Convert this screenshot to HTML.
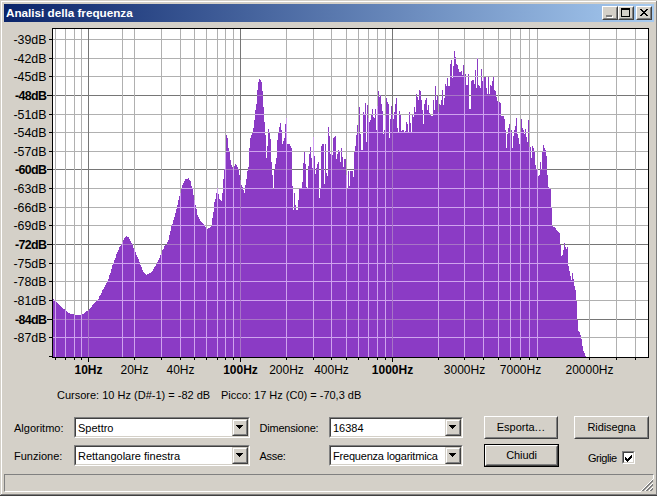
<!DOCTYPE html><html><head><meta charset="utf-8"><style>

*{margin:0;padding:0;box-sizing:border-box}
html,body{width:657px;height:496px;overflow:hidden;background:#D4D0C8}
body{position:relative;font-family:"Liberation Sans",sans-serif;font-size:11px;color:#000}
.a{position:absolute;white-space:nowrap}
.lb{position:absolute;white-space:nowrap;line-height:13px}
.db{position:absolute;right:610.5px;white-space:nowrap;line-height:13px;font-size:12.4px}
.hz{position:absolute;white-space:nowrap;line-height:13px;font-size:12px;transform:translateX(-50%)}
.combo{position:absolute;background:#fff;border-top:1px solid #808080;border-left:1px solid #808080;border-bottom:1px solid #fff;border-right:1px solid #fff}
.combo .in{position:absolute;left:0;top:0;right:0;bottom:0;border-top:1px solid #404040;border-left:1px solid #404040;border-bottom:1px solid #D4D0C8;border-right:1px solid #D4D0C8}
.combo .txt{position:absolute;left:3px;top:4px;line-height:13px;font-size:11px}
.dbtn{position:absolute;right:0;top:0;width:16px;bottom:0;background:#D4D0C8;border-top:1px solid #D4D0C8;border-left:1px solid #D4D0C8;border-bottom:1px solid #404040;border-right:1px solid #404040}
.dbtn .i2{position:absolute;left:0;top:0;right:0;bottom:0;border-top:1px solid #fff;border-left:1px solid #fff;border-bottom:1px solid #808080;border-right:1px solid #808080}
.arr{position:absolute;left:4px;top:6px;width:0;height:0;border-left:3.5px solid transparent;border-right:3.5px solid transparent;border-top:4px solid #000}
.btn{position:absolute;background:#D4D0C8;border-top:1px solid #fff;border-left:1px solid #fff;border-bottom:1px solid #404040;border-right:1px solid #404040}
.btn .i2{position:absolute;left:0;top:0;right:0;bottom:0;border-top:1px solid #D4D0C8;border-left:1px solid #D4D0C8;border-bottom:1px solid #808080;border-right:1px solid #808080}
.btn .t{position:absolute;left:0;right:0;text-align:center;line-height:13px;font-size:11px;margin-top:-1px}

</style></head><body>
<div class="a" style="left:0px;top:0px;width:657px;height:1px;background:#D4D0C8"></div>
<div class="a" style="left:0px;top:0px;width:1px;height:496px;background:#D4D0C8"></div>
<div class="a" style="left:1px;top:1px;width:655px;height:1px;background:#fff"></div>
<div class="a" style="left:1px;top:1px;width:1px;height:494px;background:#fff"></div>
<div class="a" style="left:0px;top:495px;width:657px;height:1px;background:#404040"></div>
<div class="a" style="left:1px;top:494px;width:656px;height:1px;background:#808080"></div>
<div class="a" style="left:656px;top:1px;width:1px;height:494px;background:#808080"></div>
<div class="a" style="left:4px;top:4px;width:650px;height:18px;background:linear-gradient(to right,#0A246A,#A6CAF0)"></div>
<div class="a" style="left:6px;top:5px;line-height:16px;font-size:11.7px;font-weight:bold;color:#fff">Analisi della frequenza</div>
<div class="btn" style="left:602px;top:6px;width:16px;height:14px"><div class="i2"></div></div>
<div class="btn" style="left:618px;top:6px;width:16px;height:14px"><div class="i2"></div></div>
<div class="btn" style="left:636px;top:6px;width:16px;height:14px"><div class="i2"></div></div>
<div class="a" style="left:607px;top:16px;width:6px;height:2px;background:#fff"></div>
<div class="a" style="left:606px;top:15px;width:6px;height:2px;background:#808080"></div>
<div class="a" style="left:621px;top:8px;width:9px;height:2px;background:#000"></div>
<div class="a" style="left:621px;top:10px;width:1px;height:7px;background:#000"></div>
<div class="a" style="left:629px;top:10px;width:1px;height:7px;background:#000"></div>
<div class="a" style="left:621px;top:16px;width:9px;height:1px;background:#000"></div>
<div class="a" style="left:640px;top:9px;width:1px;height:1px;background:#000"></div>
<div class="a" style="left:641px;top:9px;width:1px;height:1px;background:#000"></div>
<div class="a" style="left:646px;top:9px;width:1px;height:1px;background:#000"></div>
<div class="a" style="left:647px;top:9px;width:1px;height:1px;background:#000"></div>
<div class="a" style="left:641px;top:10px;width:1px;height:1px;background:#000"></div>
<div class="a" style="left:642px;top:10px;width:1px;height:1px;background:#000"></div>
<div class="a" style="left:645px;top:10px;width:1px;height:1px;background:#000"></div>
<div class="a" style="left:646px;top:10px;width:1px;height:1px;background:#000"></div>
<div class="a" style="left:642px;top:11px;width:1px;height:1px;background:#000"></div>
<div class="a" style="left:643px;top:11px;width:1px;height:1px;background:#000"></div>
<div class="a" style="left:644px;top:11px;width:1px;height:1px;background:#000"></div>
<div class="a" style="left:645px;top:11px;width:1px;height:1px;background:#000"></div>
<div class="a" style="left:643px;top:12px;width:1px;height:1px;background:#000"></div>
<div class="a" style="left:644px;top:12px;width:1px;height:1px;background:#000"></div>
<div class="a" style="left:642px;top:13px;width:1px;height:1px;background:#000"></div>
<div class="a" style="left:643px;top:13px;width:1px;height:1px;background:#000"></div>
<div class="a" style="left:644px;top:13px;width:1px;height:1px;background:#000"></div>
<div class="a" style="left:645px;top:13px;width:1px;height:1px;background:#000"></div>
<div class="a" style="left:641px;top:14px;width:1px;height:1px;background:#000"></div>
<div class="a" style="left:642px;top:14px;width:1px;height:1px;background:#000"></div>
<div class="a" style="left:645px;top:14px;width:1px;height:1px;background:#000"></div>
<div class="a" style="left:646px;top:14px;width:1px;height:1px;background:#000"></div>
<div class="a" style="left:640px;top:15px;width:1px;height:1px;background:#000"></div>
<div class="a" style="left:641px;top:15px;width:1px;height:1px;background:#000"></div>
<div class="a" style="left:646px;top:15px;width:1px;height:1px;background:#000"></div>
<div class="a" style="left:647px;top:15px;width:1px;height:1px;background:#000"></div>
<svg width="657" height="496" style="position:absolute;left:0;top:0">
<defs><clipPath id="sp"><polygon points="53,357 53,299 54,299 54,300 55,300 55,301 56,301 56,302 57,302 57,303 58,303 58,304 59,304 59,305 60,305 60,306 61,306 61,307 62,307 62,308 63,308 63,309 64,309 64,309 65,309 65,310 66,310 66,311 67,311 67,312 68,312 68,313 69,313 69,313 70,313 70,314 71,314 71,314 72,314 72,314 73,314 73,314 74,314 74,315 75,315 75,315 76,315 76,315 77,315 77,315 78,315 78,315 79,315 79,315 80,315 80,315 81,315 81,314 82,314 82,314 83,314 83,314 84,314 84,313 85,313 85,312 86,312 86,311 87,311 87,311 88,311 88,310 89,310 89,309 90,309 90,308 91,308 91,307 92,307 92,305 93,305 93,304 94,304 94,303 95,303 95,302 96,302 96,301 97,301 97,300 98,300 98,299 99,299 99,296 100,296 100,295 101,295 101,293 102,293 102,290 103,290 103,289 104,289 104,287 105,287 105,285 106,285 106,283 107,283 107,281 108,281 108,279 109,279 109,275 110,275 110,273 111,273 111,269 112,269 112,265 113,265 113,263 114,263 114,260 115,260 115,258 116,258 116,254 117,254 117,252 118,252 118,250 119,250 119,247 120,247 120,246 121,246 121,244 122,244 122,242 123,242 123,240 124,240 124,238 125,238 125,237 126,237 126,236 127,236 127,237 128,237 128,237 129,237 129,239 130,239 130,241 131,241 131,243 132,243 132,244 133,244 133,248 134,248 134,249 135,249 135,252 136,252 136,255 137,255 137,257 138,257 138,259 139,259 139,262 140,262 140,265 141,265 141,267 142,267 142,270 143,270 143,272 144,272 144,273 145,273 145,274 146,274 146,275 147,275 147,274 148,274 148,274 149,274 149,273 150,273 150,273 151,273 151,272 152,272 152,271 153,271 153,269 154,269 154,267 155,267 155,266 156,266 156,264 157,264 157,262 158,262 158,260 159,260 159,258 160,258 160,255 161,255 161,254 162,254 162,250 163,250 163,249 164,249 164,246 165,246 165,245 166,245 166,245 167,245 167,242 168,242 168,240 169,240 169,235 170,235 170,231 171,231 171,226 172,226 172,224 173,224 173,220 174,220 174,217 175,217 175,213 176,213 176,209 177,209 177,205 178,205 178,200 179,200 179,196 180,196 180,193 181,193 181,189 182,189 182,185 183,185 183,183 184,183 184,181 185,181 185,179 186,179 186,179 187,179 187,179 188,179 188,178 189,178 189,180 190,180 190,181 191,181 191,186 192,186 192,188 193,188 193,195 194,195 194,200 195,200 195,205 196,205 196,209 197,209 197,215 198,215 198,217 199,217 199,219 200,219 200,221 201,221 201,222 202,222 202,223 203,223 203,224 204,224 204,225 205,225 205,227 206,227 206,228 207,228 207,229 208,229 208,228 209,228 209,228 210,228 210,227 211,227 211,226 212,226 212,218 213,218 213,212 214,212 214,202 215,202 215,199 216,199 216,193 217,193 217,188 218,188 218,194 219,194 219,199 220,199 220,200 221,200 221,201 222,201 222,193 223,193 223,179 224,179 224,169 225,169 225,153 226,153 226,135 227,135 227,138 228,138 228,148 229,148 229,152 230,152 230,160 231,160 231,165 232,165 232,167 233,167 233,168 234,168 234,166 235,166 235,164 236,164 236,165 237,165 237,167 238,167 238,169 239,169 239,175 240,175 240,180 241,180 241,185 242,185 242,187 243,187 243,190 244,190 244,193 245,193 245,185 246,185 246,179 247,179 247,171 248,171 248,167 249,167 249,148 250,148 250,138 251,138 251,135 252,135 252,133 253,133 253,128 254,128 254,120 255,120 255,110 256,110 256,104 257,104 257,90 258,90 258,82 259,82 259,79 260,79 260,80 261,80 261,82 262,82 262,91 263,91 263,107 264,107 264,122 265,122 265,135 266,135 266,158 267,158 267,146 268,146 268,129 269,129 269,133 270,133 270,139 271,139 271,162 272,162 272,175 273,175 273,189 274,189 274,170 275,170 275,164 276,164 276,158 277,158 277,140 278,140 278,133 279,133 279,127 280,127 280,123 281,123 281,130 282,130 282,144 283,144 283,141 284,141 284,138 285,138 285,124 286,124 286,118 287,118 287,144 288,144 288,144 289,144 289,144 290,144 290,146 291,146 291,148 292,148 292,186 293,186 293,210 294,210 294,193 295,193 295,205 296,205 296,210 297,210 297,210 298,210 298,200 299,200 299,189 300,189 300,188 301,188 301,188 302,188 302,182 303,182 303,163 304,163 304,152 305,152 305,164 306,164 306,187 307,187 307,188 308,188 308,166 309,166 309,154 310,154 310,147 311,147 311,158 312,158 312,168 313,168 313,137 314,137 314,156 315,156 315,174 316,174 316,168 317,168 317,164 318,164 318,162 319,162 319,198 320,198 320,188 321,188 321,146 322,146 322,144 323,144 323,144 324,144 324,184 325,184 325,144 326,144 326,173 327,173 327,176 328,176 328,127 329,127 329,136 330,136 330,154 331,154 331,152 332,152 332,155 333,155 333,138 334,138 334,137 335,137 335,136 336,136 336,159 337,159 337,154 338,154 338,150 339,150 339,151 340,151 340,162 341,162 341,148 342,148 342,157 343,157 343,167 344,167 344,159 345,159 345,159 346,159 346,175 347,175 347,189 348,189 348,171 349,171 349,186 350,186 350,171 351,171 351,171 352,171 352,171 353,171 353,177 354,177 354,152 355,152 355,146 356,146 356,135 357,135 357,125 358,125 358,134 359,134 359,107 360,107 360,134 361,134 361,150 362,150 362,150 363,150 363,112 364,112 364,114 365,114 365,103 366,103 366,142 367,142 367,105 368,105 368,118 369,118 369,122 370,122 370,120 371,120 371,115 372,115 372,109 373,109 373,117 374,117 374,118 375,118 375,109 376,109 376,130 377,130 377,106 378,106 378,91 379,91 379,97 380,97 380,95 381,95 381,104 382,104 382,111 383,111 383,134 384,134 384,130 385,130 385,116 386,116 386,98 387,98 387,102 388,102 388,104 389,104 389,138 390,138 390,119 391,119 391,106 392,106 392,114 393,114 393,119 394,119 394,112 395,112 395,104 396,104 396,98 397,98 397,128 398,128 398,132 399,132 399,111 400,111 400,115 401,115 401,131 402,131 402,130 403,130 403,130 404,130 404,132 405,132 405,131 406,131 406,122 407,122 407,124 408,124 408,132 409,132 409,112 410,112 410,123 411,123 411,132 412,132 412,115 413,115 413,117 414,117 414,107 415,107 415,112 416,112 416,94 417,94 417,97 418,97 418,100 419,100 419,90 420,90 420,91 421,91 421,100 422,100 422,110 423,110 423,124 424,124 424,104 425,104 425,100 426,100 426,98 427,98 427,110 428,110 428,105 429,105 429,113 430,113 430,115 431,115 431,116 432,116 432,116 433,116 433,100 434,100 434,110 435,110 435,86 436,86 436,100 437,100 437,96 438,96 438,112 439,112 439,104 440,104 440,105 441,105 441,100 442,100 442,90 443,90 443,105 444,105 444,98 445,98 445,84 446,84 446,86 447,86 447,78 448,78 448,86 449,86 449,86 450,86 450,64 451,64 451,60 452,60 452,78 453,78 453,66 454,66 454,51 455,51 455,57 456,57 456,64 457,64 457,65 458,65 458,69 459,69 459,72 460,72 460,72 461,72 461,71 462,71 462,75 463,75 463,65 464,65 464,77 465,77 465,74 466,74 466,85 467,85 467,85 468,85 468,74 469,74 469,109 470,109 470,109 471,109 471,81 472,81 472,80 473,80 473,80 474,80 474,84 475,84 475,70 476,70 476,88 477,88 477,58 478,58 478,85 479,85 479,86 480,86 480,88 481,88 481,69 482,69 482,81 483,81 483,78 484,78 484,77 485,77 485,77 486,77 486,88 487,88 487,94 488,94 488,77 489,77 489,94 490,94 490,85 491,85 491,86 492,86 492,81 493,81 493,77 494,77 494,90 495,90 495,91 496,91 496,97 497,97 497,101 498,101 498,102 499,102 499,102 500,102 500,103 501,103 501,116 502,116 502,116 503,116 503,116 504,116 504,119 505,119 505,130 506,130 506,148 507,148 507,134 508,134 508,128 509,128 509,124 510,124 510,132 511,132 511,130 512,130 512,148 513,148 513,136 514,136 514,130 515,130 515,126 516,126 516,118 517,118 517,134 518,134 518,138 519,138 519,144 520,144 520,132 521,132 521,119 522,119 522,128 523,128 523,130 524,130 524,134 525,134 525,129 526,129 526,137 527,137 527,142 528,142 528,120 529,120 529,147 530,147 530,147 531,147 531,158 532,158 532,146 533,146 533,148 534,148 534,152 535,152 535,165 536,165 536,169 537,169 537,169 538,169 538,176 539,176 539,175 540,175 540,162 541,162 541,169 542,169 542,152 543,152 543,145 544,145 544,148 545,148 545,150 546,150 546,156 547,156 547,175 548,175 548,187 549,187 549,188 550,188 550,189 551,189 551,207 552,207 552,226 553,226 553,227 554,227 554,227 555,227 555,228 556,228 556,230 557,230 557,231 558,231 558,232 559,232 559,233 560,233 560,245 561,245 561,256 562,256 562,255 563,255 563,250 564,250 564,243 565,243 565,247 566,247 566,249 567,249 567,247 568,247 568,266 569,266 569,271 570,271 570,276 571,276 571,280 572,280 572,273 573,273 573,279 574,279 574,286 575,286 575,290 576,290 576,301 577,301 577,320 578,320 578,331 579,331 579,332 580,332 580,335 581,335 581,339 582,339 582,346 583,346 583,351 584,351 584,353 585,353 585,356 586,356 586,357 587,357 587,357"/></clipPath></defs>
<rect x="52" y="28" width="597" height="330" fill="#fff"/>
<polygon points="53,357 53,299 54,299 54,300 55,300 55,301 56,301 56,302 57,302 57,303 58,303 58,304 59,304 59,305 60,305 60,306 61,306 61,307 62,307 62,308 63,308 63,309 64,309 64,309 65,309 65,310 66,310 66,311 67,311 67,312 68,312 68,313 69,313 69,313 70,313 70,314 71,314 71,314 72,314 72,314 73,314 73,314 74,314 74,315 75,315 75,315 76,315 76,315 77,315 77,315 78,315 78,315 79,315 79,315 80,315 80,315 81,315 81,314 82,314 82,314 83,314 83,314 84,314 84,313 85,313 85,312 86,312 86,311 87,311 87,311 88,311 88,310 89,310 89,309 90,309 90,308 91,308 91,307 92,307 92,305 93,305 93,304 94,304 94,303 95,303 95,302 96,302 96,301 97,301 97,300 98,300 98,299 99,299 99,296 100,296 100,295 101,295 101,293 102,293 102,290 103,290 103,289 104,289 104,287 105,287 105,285 106,285 106,283 107,283 107,281 108,281 108,279 109,279 109,275 110,275 110,273 111,273 111,269 112,269 112,265 113,265 113,263 114,263 114,260 115,260 115,258 116,258 116,254 117,254 117,252 118,252 118,250 119,250 119,247 120,247 120,246 121,246 121,244 122,244 122,242 123,242 123,240 124,240 124,238 125,238 125,237 126,237 126,236 127,236 127,237 128,237 128,237 129,237 129,239 130,239 130,241 131,241 131,243 132,243 132,244 133,244 133,248 134,248 134,249 135,249 135,252 136,252 136,255 137,255 137,257 138,257 138,259 139,259 139,262 140,262 140,265 141,265 141,267 142,267 142,270 143,270 143,272 144,272 144,273 145,273 145,274 146,274 146,275 147,275 147,274 148,274 148,274 149,274 149,273 150,273 150,273 151,273 151,272 152,272 152,271 153,271 153,269 154,269 154,267 155,267 155,266 156,266 156,264 157,264 157,262 158,262 158,260 159,260 159,258 160,258 160,255 161,255 161,254 162,254 162,250 163,250 163,249 164,249 164,246 165,246 165,245 166,245 166,245 167,245 167,242 168,242 168,240 169,240 169,235 170,235 170,231 171,231 171,226 172,226 172,224 173,224 173,220 174,220 174,217 175,217 175,213 176,213 176,209 177,209 177,205 178,205 178,200 179,200 179,196 180,196 180,193 181,193 181,189 182,189 182,185 183,185 183,183 184,183 184,181 185,181 185,179 186,179 186,179 187,179 187,179 188,179 188,178 189,178 189,180 190,180 190,181 191,181 191,186 192,186 192,188 193,188 193,195 194,195 194,200 195,200 195,205 196,205 196,209 197,209 197,215 198,215 198,217 199,217 199,219 200,219 200,221 201,221 201,222 202,222 202,223 203,223 203,224 204,224 204,225 205,225 205,227 206,227 206,228 207,228 207,229 208,229 208,228 209,228 209,228 210,228 210,227 211,227 211,226 212,226 212,218 213,218 213,212 214,212 214,202 215,202 215,199 216,199 216,193 217,193 217,188 218,188 218,194 219,194 219,199 220,199 220,200 221,200 221,201 222,201 222,193 223,193 223,179 224,179 224,169 225,169 225,153 226,153 226,135 227,135 227,138 228,138 228,148 229,148 229,152 230,152 230,160 231,160 231,165 232,165 232,167 233,167 233,168 234,168 234,166 235,166 235,164 236,164 236,165 237,165 237,167 238,167 238,169 239,169 239,175 240,175 240,180 241,180 241,185 242,185 242,187 243,187 243,190 244,190 244,193 245,193 245,185 246,185 246,179 247,179 247,171 248,171 248,167 249,167 249,148 250,148 250,138 251,138 251,135 252,135 252,133 253,133 253,128 254,128 254,120 255,120 255,110 256,110 256,104 257,104 257,90 258,90 258,82 259,82 259,79 260,79 260,80 261,80 261,82 262,82 262,91 263,91 263,107 264,107 264,122 265,122 265,135 266,135 266,158 267,158 267,146 268,146 268,129 269,129 269,133 270,133 270,139 271,139 271,162 272,162 272,175 273,175 273,189 274,189 274,170 275,170 275,164 276,164 276,158 277,158 277,140 278,140 278,133 279,133 279,127 280,127 280,123 281,123 281,130 282,130 282,144 283,144 283,141 284,141 284,138 285,138 285,124 286,124 286,118 287,118 287,144 288,144 288,144 289,144 289,144 290,144 290,146 291,146 291,148 292,148 292,186 293,186 293,210 294,210 294,193 295,193 295,205 296,205 296,210 297,210 297,210 298,210 298,200 299,200 299,189 300,189 300,188 301,188 301,188 302,188 302,182 303,182 303,163 304,163 304,152 305,152 305,164 306,164 306,187 307,187 307,188 308,188 308,166 309,166 309,154 310,154 310,147 311,147 311,158 312,158 312,168 313,168 313,137 314,137 314,156 315,156 315,174 316,174 316,168 317,168 317,164 318,164 318,162 319,162 319,198 320,198 320,188 321,188 321,146 322,146 322,144 323,144 323,144 324,144 324,184 325,184 325,144 326,144 326,173 327,173 327,176 328,176 328,127 329,127 329,136 330,136 330,154 331,154 331,152 332,152 332,155 333,155 333,138 334,138 334,137 335,137 335,136 336,136 336,159 337,159 337,154 338,154 338,150 339,150 339,151 340,151 340,162 341,162 341,148 342,148 342,157 343,157 343,167 344,167 344,159 345,159 345,159 346,159 346,175 347,175 347,189 348,189 348,171 349,171 349,186 350,186 350,171 351,171 351,171 352,171 352,171 353,171 353,177 354,177 354,152 355,152 355,146 356,146 356,135 357,135 357,125 358,125 358,134 359,134 359,107 360,107 360,134 361,134 361,150 362,150 362,150 363,150 363,112 364,112 364,114 365,114 365,103 366,103 366,142 367,142 367,105 368,105 368,118 369,118 369,122 370,122 370,120 371,120 371,115 372,115 372,109 373,109 373,117 374,117 374,118 375,118 375,109 376,109 376,130 377,130 377,106 378,106 378,91 379,91 379,97 380,97 380,95 381,95 381,104 382,104 382,111 383,111 383,134 384,134 384,130 385,130 385,116 386,116 386,98 387,98 387,102 388,102 388,104 389,104 389,138 390,138 390,119 391,119 391,106 392,106 392,114 393,114 393,119 394,119 394,112 395,112 395,104 396,104 396,98 397,98 397,128 398,128 398,132 399,132 399,111 400,111 400,115 401,115 401,131 402,131 402,130 403,130 403,130 404,130 404,132 405,132 405,131 406,131 406,122 407,122 407,124 408,124 408,132 409,132 409,112 410,112 410,123 411,123 411,132 412,132 412,115 413,115 413,117 414,117 414,107 415,107 415,112 416,112 416,94 417,94 417,97 418,97 418,100 419,100 419,90 420,90 420,91 421,91 421,100 422,100 422,110 423,110 423,124 424,124 424,104 425,104 425,100 426,100 426,98 427,98 427,110 428,110 428,105 429,105 429,113 430,113 430,115 431,115 431,116 432,116 432,116 433,116 433,100 434,100 434,110 435,110 435,86 436,86 436,100 437,100 437,96 438,96 438,112 439,112 439,104 440,104 440,105 441,105 441,100 442,100 442,90 443,90 443,105 444,105 444,98 445,98 445,84 446,84 446,86 447,86 447,78 448,78 448,86 449,86 449,86 450,86 450,64 451,64 451,60 452,60 452,78 453,78 453,66 454,66 454,51 455,51 455,57 456,57 456,64 457,64 457,65 458,65 458,69 459,69 459,72 460,72 460,72 461,72 461,71 462,71 462,75 463,75 463,65 464,65 464,77 465,77 465,74 466,74 466,85 467,85 467,85 468,85 468,74 469,74 469,109 470,109 470,109 471,109 471,81 472,81 472,80 473,80 473,80 474,80 474,84 475,84 475,70 476,70 476,88 477,88 477,58 478,58 478,85 479,85 479,86 480,86 480,88 481,88 481,69 482,69 482,81 483,81 483,78 484,78 484,77 485,77 485,77 486,77 486,88 487,88 487,94 488,94 488,77 489,77 489,94 490,94 490,85 491,85 491,86 492,86 492,81 493,81 493,77 494,77 494,90 495,90 495,91 496,91 496,97 497,97 497,101 498,101 498,102 499,102 499,102 500,102 500,103 501,103 501,116 502,116 502,116 503,116 503,116 504,116 504,119 505,119 505,130 506,130 506,148 507,148 507,134 508,134 508,128 509,128 509,124 510,124 510,132 511,132 511,130 512,130 512,148 513,148 513,136 514,136 514,130 515,130 515,126 516,126 516,118 517,118 517,134 518,134 518,138 519,138 519,144 520,144 520,132 521,132 521,119 522,119 522,128 523,128 523,130 524,130 524,134 525,134 525,129 526,129 526,137 527,137 527,142 528,142 528,120 529,120 529,147 530,147 530,147 531,147 531,158 532,158 532,146 533,146 533,148 534,148 534,152 535,152 535,165 536,165 536,169 537,169 537,169 538,169 538,176 539,176 539,175 540,175 540,162 541,162 541,169 542,169 542,152 543,152 543,145 544,145 544,148 545,148 545,150 546,150 546,156 547,156 547,175 548,175 548,187 549,187 549,188 550,188 550,189 551,189 551,207 552,207 552,226 553,226 553,227 554,227 554,227 555,227 555,228 556,228 556,230 557,230 557,231 558,231 558,232 559,232 559,233 560,233 560,245 561,245 561,256 562,256 562,255 563,255 563,250 564,250 564,243 565,243 565,247 566,247 566,249 567,249 567,247 568,247 568,266 569,266 569,271 570,271 570,276 571,276 571,280 572,280 572,273 573,273 573,279 574,279 574,286 575,286 575,290 576,290 576,301 577,301 577,320 578,320 578,331 579,331 579,332 580,332 580,335 581,335 581,339 582,339 582,346 583,346 583,351 584,351 584,353 585,353 585,356 586,356 586,357 587,357 587,357" fill="#8B3BC5" shape-rendering="crispEdges"/>
<rect x="53" y="39" width="595" height="1" fill="#B0B0B0"/><rect x="53" y="58" width="595" height="1" fill="#B0B0B0"/><rect x="53" y="76" width="595" height="1" fill="#B0B0B0"/><rect x="53" y="95" width="595" height="1" fill="#767676"/><rect x="53" y="114" width="595" height="1" fill="#B0B0B0"/><rect x="53" y="132" width="595" height="1" fill="#B0B0B0"/><rect x="53" y="151" width="595" height="1" fill="#B0B0B0"/><rect x="53" y="169" width="595" height="1" fill="#767676"/><rect x="53" y="188" width="595" height="1" fill="#B0B0B0"/><rect x="53" y="207" width="595" height="1" fill="#B0B0B0"/><rect x="53" y="225" width="595" height="1" fill="#B0B0B0"/><rect x="53" y="244" width="595" height="1" fill="#767676"/><rect x="53" y="263" width="595" height="1" fill="#B0B0B0"/><rect x="53" y="281" width="595" height="1" fill="#B0B0B0"/><rect x="53" y="300" width="595" height="1" fill="#B0B0B0"/><rect x="53" y="319" width="595" height="1" fill="#767676"/><rect x="53" y="337" width="595" height="1" fill="#B0B0B0"/><rect x="55" y="29" width="1" height="328" fill="#B0B0B0"/><rect x="65" y="29" width="1" height="328" fill="#B0B0B0"/><rect x="74" y="29" width="1" height="328" fill="#B0B0B0"/><rect x="81" y="29" width="1" height="328" fill="#B0B0B0"/><rect x="88" y="29" width="1" height="328" fill="#767676"/><rect x="134" y="29" width="1" height="328" fill="#B0B0B0"/><rect x="161" y="29" width="1" height="328" fill="#B0B0B0"/><rect x="180" y="29" width="1" height="328" fill="#B0B0B0"/><rect x="194" y="29" width="1" height="328" fill="#B0B0B0"/><rect x="206" y="29" width="1" height="328" fill="#B0B0B0"/><rect x="217" y="29" width="1" height="328" fill="#B0B0B0"/><rect x="225" y="29" width="1" height="328" fill="#B0B0B0"/><rect x="233" y="29" width="1" height="328" fill="#B0B0B0"/><rect x="240" y="29" width="1" height="328" fill="#767676"/><rect x="286" y="29" width="1" height="328" fill="#B0B0B0"/><rect x="313" y="29" width="1" height="328" fill="#B0B0B0"/><rect x="331" y="29" width="1" height="328" fill="#B0B0B0"/><rect x="346" y="29" width="1" height="328" fill="#B0B0B0"/><rect x="358" y="29" width="1" height="328" fill="#B0B0B0"/><rect x="368" y="29" width="1" height="328" fill="#B0B0B0"/><rect x="377" y="29" width="1" height="328" fill="#B0B0B0"/><rect x="385" y="29" width="1" height="328" fill="#B0B0B0"/><rect x="392" y="29" width="1" height="328" fill="#767676"/><rect x="438" y="29" width="1" height="328" fill="#B0B0B0"/><rect x="464" y="29" width="1" height="328" fill="#B0B0B0"/><rect x="483" y="29" width="1" height="328" fill="#B0B0B0"/><rect x="498" y="29" width="1" height="328" fill="#B0B0B0"/><rect x="510" y="29" width="1" height="328" fill="#B0B0B0"/><rect x="520" y="29" width="1" height="328" fill="#B0B0B0"/><rect x="529" y="29" width="1" height="328" fill="#B0B0B0"/><rect x="537" y="29" width="1" height="328" fill="#B0B0B0"/><rect x="589" y="29" width="1" height="328" fill="#B0B0B0"/><rect x="616" y="29" width="1" height="328" fill="#B0B0B0"/><rect x="635" y="29" width="1" height="328" fill="#B0B0B0"/><rect x="122" y="29" width="1" height="328" fill="#B0B0B0"/>
<g clip-path="url(#sp)"><rect x="53" y="39" width="595" height="1" fill="#CFA3EE"/><rect x="53" y="58" width="595" height="1" fill="#CFA3EE"/><rect x="53" y="76" width="595" height="1" fill="#CFA3EE"/><rect x="53" y="95" width="595" height="1" fill="#A775C6"/><rect x="53" y="114" width="595" height="1" fill="#CFA3EE"/><rect x="53" y="132" width="595" height="1" fill="#CFA3EE"/><rect x="53" y="151" width="595" height="1" fill="#CFA3EE"/><rect x="53" y="169" width="595" height="1" fill="#A775C6"/><rect x="53" y="188" width="595" height="1" fill="#CFA3EE"/><rect x="53" y="207" width="595" height="1" fill="#CFA3EE"/><rect x="53" y="225" width="595" height="1" fill="#CFA3EE"/><rect x="53" y="244" width="595" height="1" fill="#A775C6"/><rect x="53" y="263" width="595" height="1" fill="#CFA3EE"/><rect x="53" y="281" width="595" height="1" fill="#CFA3EE"/><rect x="53" y="300" width="595" height="1" fill="#CFA3EE"/><rect x="53" y="319" width="595" height="1" fill="#A775C6"/><rect x="53" y="337" width="595" height="1" fill="#CFA3EE"/><rect x="55" y="29" width="1" height="328" fill="#CFA3EE"/><rect x="65" y="29" width="1" height="328" fill="#CFA3EE"/><rect x="74" y="29" width="1" height="328" fill="#CFA3EE"/><rect x="81" y="29" width="1" height="328" fill="#CFA3EE"/><rect x="88" y="29" width="1" height="328" fill="#A775C6"/><rect x="134" y="29" width="1" height="328" fill="#CFA3EE"/><rect x="161" y="29" width="1" height="328" fill="#CFA3EE"/><rect x="180" y="29" width="1" height="328" fill="#CFA3EE"/><rect x="194" y="29" width="1" height="328" fill="#CFA3EE"/><rect x="206" y="29" width="1" height="328" fill="#CFA3EE"/><rect x="217" y="29" width="1" height="328" fill="#CFA3EE"/><rect x="225" y="29" width="1" height="328" fill="#CFA3EE"/><rect x="233" y="29" width="1" height="328" fill="#CFA3EE"/><rect x="240" y="29" width="1" height="328" fill="#A775C6"/><rect x="286" y="29" width="1" height="328" fill="#CFA3EE"/><rect x="313" y="29" width="1" height="328" fill="#CFA3EE"/><rect x="331" y="29" width="1" height="328" fill="#CFA3EE"/><rect x="346" y="29" width="1" height="328" fill="#CFA3EE"/><rect x="358" y="29" width="1" height="328" fill="#CFA3EE"/><rect x="368" y="29" width="1" height="328" fill="#CFA3EE"/><rect x="377" y="29" width="1" height="328" fill="#CFA3EE"/><rect x="385" y="29" width="1" height="328" fill="#CFA3EE"/><rect x="392" y="29" width="1" height="328" fill="#A775C6"/><rect x="438" y="29" width="1" height="328" fill="#CFA3EE"/><rect x="464" y="29" width="1" height="328" fill="#CFA3EE"/><rect x="483" y="29" width="1" height="328" fill="#CFA3EE"/><rect x="498" y="29" width="1" height="328" fill="#CFA3EE"/><rect x="510" y="29" width="1" height="328" fill="#CFA3EE"/><rect x="520" y="29" width="1" height="328" fill="#CFA3EE"/><rect x="529" y="29" width="1" height="328" fill="#CFA3EE"/><rect x="537" y="29" width="1" height="328" fill="#CFA3EE"/><rect x="589" y="29" width="1" height="328" fill="#CFA3EE"/><rect x="616" y="29" width="1" height="328" fill="#CFA3EE"/><rect x="635" y="29" width="1" height="328" fill="#CFA3EE"/><rect x="122" y="29" width="1" height="328" fill="#CFA3EE"/></g>
<rect x="52" y="28" width="597" height="1" fill="#000"/>
<rect x="52" y="357" width="597" height="1" fill="#000"/>
<rect x="52" y="28" width="1" height="330" fill="#000"/>
<rect x="648" y="28" width="1" height="330" fill="#000"/>
<rect x="49" y="39" width="3" height="1" fill="#000"/>
<rect x="49" y="58" width="3" height="1" fill="#000"/>
<rect x="49" y="76" width="3" height="1" fill="#000"/>
<rect x="47" y="95" width="5" height="1" fill="#000"/>
<rect x="49" y="114" width="3" height="1" fill="#000"/>
<rect x="49" y="132" width="3" height="1" fill="#000"/>
<rect x="49" y="151" width="3" height="1" fill="#000"/>
<rect x="47" y="169" width="5" height="1" fill="#000"/>
<rect x="49" y="188" width="3" height="1" fill="#000"/>
<rect x="49" y="207" width="3" height="1" fill="#000"/>
<rect x="49" y="225" width="3" height="1" fill="#000"/>
<rect x="47" y="244" width="5" height="1" fill="#000"/>
<rect x="49" y="263" width="3" height="1" fill="#000"/>
<rect x="49" y="281" width="3" height="1" fill="#000"/>
<rect x="49" y="300" width="3" height="1" fill="#000"/>
<rect x="47" y="319" width="5" height="1" fill="#000"/>
<rect x="49" y="337" width="3" height="1" fill="#000"/>
<rect x="49" y="356" width="3" height="1" fill="#000"/>
<rect x="55" y="358" width="1" height="2" fill="#000"/>
<rect x="65" y="358" width="1" height="2" fill="#000"/>
<rect x="74" y="358" width="1" height="2" fill="#000"/>
<rect x="81" y="358" width="1" height="2" fill="#000"/>
<rect x="88" y="358" width="1" height="4" fill="#000"/>
<rect x="134" y="358" width="1" height="2" fill="#000"/>
<rect x="161" y="358" width="1" height="2" fill="#000"/>
<rect x="180" y="358" width="1" height="2" fill="#000"/>
<rect x="194" y="358" width="1" height="2" fill="#000"/>
<rect x="206" y="358" width="1" height="2" fill="#000"/>
<rect x="217" y="358" width="1" height="2" fill="#000"/>
<rect x="225" y="358" width="1" height="2" fill="#000"/>
<rect x="233" y="358" width="1" height="2" fill="#000"/>
<rect x="240" y="358" width="1" height="4" fill="#000"/>
<rect x="286" y="358" width="1" height="2" fill="#000"/>
<rect x="313" y="358" width="1" height="2" fill="#000"/>
<rect x="331" y="358" width="1" height="2" fill="#000"/>
<rect x="346" y="358" width="1" height="2" fill="#000"/>
<rect x="358" y="358" width="1" height="2" fill="#000"/>
<rect x="368" y="358" width="1" height="2" fill="#000"/>
<rect x="377" y="358" width="1" height="2" fill="#000"/>
<rect x="385" y="358" width="1" height="2" fill="#000"/>
<rect x="392" y="358" width="1" height="4" fill="#000"/>
<rect x="438" y="358" width="1" height="2" fill="#000"/>
<rect x="464" y="358" width="1" height="2" fill="#000"/>
<rect x="483" y="358" width="1" height="2" fill="#000"/>
<rect x="498" y="358" width="1" height="2" fill="#000"/>
<rect x="510" y="358" width="1" height="2" fill="#000"/>
<rect x="520" y="358" width="1" height="2" fill="#000"/>
<rect x="529" y="358" width="1" height="2" fill="#000"/>
<rect x="537" y="358" width="1" height="2" fill="#000"/>
<rect x="589" y="358" width="1" height="2" fill="#000"/>
<rect x="616" y="358" width="1" height="2" fill="#000"/>
<rect x="635" y="358" width="1" height="2" fill="#000"/>
</svg>
<div class="db" style="top:34px;">-39dB</div>
<div class="db" style="top:53px;">-42dB</div>
<div class="db" style="top:71px;">-45dB</div>
<div class="db" style="top:90px;font-weight:bold;letter-spacing:-0.6px;margin-right:0.2px;">-48dB</div>
<div class="db" style="top:109px;">-51dB</div>
<div class="db" style="top:127px;">-54dB</div>
<div class="db" style="top:146px;">-57dB</div>
<div class="db" style="top:164px;font-weight:bold;letter-spacing:-0.6px;margin-right:0.2px;">-60dB</div>
<div class="db" style="top:183px;">-63dB</div>
<div class="db" style="top:202px;">-66dB</div>
<div class="db" style="top:220px;">-69dB</div>
<div class="db" style="top:239px;font-weight:bold;letter-spacing:-0.6px;margin-right:0.2px;">-72dB</div>
<div class="db" style="top:258px;">-75dB</div>
<div class="db" style="top:276px;">-78dB</div>
<div class="db" style="top:295px;">-81dB</div>
<div class="db" style="top:314px;font-weight:bold;letter-spacing:-0.6px;margin-right:0.2px;">-84dB</div>
<div class="db" style="top:332px;">-87dB</div>
<div class="hz" style="left:88.5px;top:364px;font-weight:bold;">10Hz</div>
<div class="hz" style="left:134.5px;top:364px;">20Hz</div>
<div class="hz" style="left:180.5px;top:364px;">40Hz</div>
<div class="hz" style="left:240.5px;top:364px;font-weight:bold;">100Hz</div>
<div class="hz" style="left:286.5px;top:364px;">200Hz</div>
<div class="hz" style="left:331.5px;top:364px;">400Hz</div>
<div class="hz" style="left:392.5px;top:364px;font-weight:bold;">1000Hz</div>
<div class="hz" style="left:464.5px;top:364px;">3000Hz</div>
<div class="hz" style="left:520.5px;top:364px;">7000Hz</div>
<div class="hz" style="left:589.5px;top:364px;">20000Hz</div>
<div class="lb" style="left:57px;top:389px;font-size:11px">Cursore: 10 Hz (D#-1) = -82 dB</div>
<div class="lb" style="left:221px;top:389px;font-size:11px">Picco: 17 Hz (C0) = -70,3 dB</div>
<div class="lb" style="left:14px;top:422px;font-size:11px">Algoritmo:</div>
<div class="lb" style="left:14px;top:450px;font-size:11px">Funzione:</div>
<div class="lb" style="left:259.5px;top:422px;font-size:11px;letter-spacing:-0.2px">Dimensione:</div>
<div class="lb" style="left:259.5px;top:450px;font-size:11px;letter-spacing:-0.3px">Asse:</div>
<div class="combo" style="left:74px;top:417px;width:176px;height:21px"><div class="in"></div><div class="txt">Spettro</div><div class="dbtn" style="right:1px;top:1px;bottom:1px;width:16px;height:auto"><div class="i2"><svg class="a" style="left:2px;top:4px" width="7" height="4"><rect x="0" y="0" width="7" height="1"/><rect x="1" y="1" width="5" height="1"/><rect x="2" y="2" width="3" height="1"/><rect x="3" y="3" width="1" height="1"/></svg></div></div></div>
<div class="combo" style="left:74px;top:445px;width:176px;height:21px"><div class="in"></div><div class="txt">Rettangolare finestra</div><div class="dbtn" style="right:1px;top:1px;bottom:1px;width:16px;height:auto"><div class="i2"><svg class="a" style="left:2px;top:4px" width="7" height="4"><rect x="0" y="0" width="7" height="1"/><rect x="1" y="1" width="5" height="1"/><rect x="2" y="2" width="3" height="1"/><rect x="3" y="3" width="1" height="1"/></svg></div></div></div>
<div class="combo" style="left:329px;top:417px;width:134px;height:21px"><div class="in"></div><div class="txt">16384</div><div class="dbtn" style="right:1px;top:1px;bottom:1px;width:16px;height:auto"><div class="i2"><svg class="a" style="left:2px;top:4px" width="7" height="4"><rect x="0" y="0" width="7" height="1"/><rect x="1" y="1" width="5" height="1"/><rect x="2" y="2" width="3" height="1"/><rect x="3" y="3" width="1" height="1"/></svg></div></div></div>
<div class="combo" style="left:329px;top:445px;width:134px;height:21px"><div class="in"></div><div class="txt"><span style="letter-spacing:-0.2px">Frequenza logaritmica</span></div><div class="dbtn" style="right:1px;top:1px;bottom:1px;width:16px;height:auto"><div class="i2"><svg class="a" style="left:2px;top:4px" width="7" height="4"><rect x="0" y="0" width="7" height="1"/><rect x="1" y="1" width="5" height="1"/><rect x="2" y="2" width="3" height="1"/><rect x="3" y="3" width="1" height="1"/></svg></div></div></div>
<div class="btn" style="left:484px;top:416px;width:74px;height:23px"><div class="i2"><div class="t" style="top:4px">Esporta<span style="letter-spacing:0.5px">...</span></div></div></div>
<div class="a" style="left:484px;top:444px;width:75px;height:23px;border:1px solid #000"><div class="btn" style="left:0;top:0;width:73px;height:21px"><div class="i2"><div class="t" style="top:3px;letter-spacing:-0.1px">Chiudi</div></div></div></div>
<div class="btn" style="left:574px;top:416px;width:75px;height:23px"><div class="i2"><div class="t" style="top:4px;letter-spacing:-0.1px">Ridisegna</div></div></div>
<div class="lb" style="left:588px;top:452px;font-size:11px;letter-spacing:-0.45px">Griglie</div>
<div class="a" style="left:622px;top:451px;width:13px;height:13px;background:#fff;border-top:1px solid #808080;border-left:1px solid #808080;border-right:1px solid #fff;border-bottom:1px solid #fff"><div class="a" style="left:0;top:0;width:11px;height:11px;border-top:1px solid #404040;border-left:1px solid #404040;border-right:1px solid #D4D0C8;border-bottom:1px solid #D4D0C8"></div></div>
<div class="a" style="left:631px;top:455px;width:1px;height:1px;background:#000"></div>
<div class="a" style="left:630px;top:456px;width:2px;height:1px;background:#000"></div>
<div class="a" style="left:625px;top:457px;width:1px;height:1px;background:#000"></div>
<div class="a" style="left:629px;top:457px;width:3px;height:1px;background:#000"></div>
<div class="a" style="left:625px;top:458px;width:2px;height:1px;background:#000"></div>
<div class="a" style="left:628px;top:458px;width:3px;height:1px;background:#000"></div>
<div class="a" style="left:625px;top:459px;width:5px;height:1px;background:#000"></div>
<div class="a" style="left:626px;top:460px;width:3px;height:1px;background:#000"></div>
<div class="a" style="left:627px;top:461px;width:1px;height:1px;background:#000"></div>
<div class="a" style="left:4px;top:474px;width:650px;height:18px;border-top:1px solid #808080;border-left:1px solid #808080;border-right:1px solid #fff;border-bottom:1px solid #fff"></div>
<svg class="a" style="left:641px;top:479px" width="13" height="13"><rect x="0" y="0" width="13" height="13" fill="#D4D0C8"/><rect x="11" y="0" width="1" height="1" fill="#fff"/><rect x="10" y="1" width="1" height="1" fill="#fff"/><rect x="11" y="1" width="1" height="1" fill="#808080"/><rect x="9" y="2" width="1" height="1" fill="#fff"/><rect x="10" y="2" width="1" height="1" fill="#808080"/><rect x="11" y="2" width="1" height="1" fill="#808080"/><rect x="8" y="3" width="1" height="1" fill="#fff"/><rect x="9" y="3" width="1" height="1" fill="#808080"/><rect x="10" y="3" width="1" height="1" fill="#808080"/><rect x="7" y="4" width="1" height="1" fill="#fff"/><rect x="8" y="4" width="1" height="1" fill="#808080"/><rect x="9" y="4" width="1" height="1" fill="#808080"/><rect x="11" y="4" width="1" height="1" fill="#fff"/><rect x="6" y="5" width="1" height="1" fill="#fff"/><rect x="7" y="5" width="1" height="1" fill="#808080"/><rect x="8" y="5" width="1" height="1" fill="#808080"/><rect x="10" y="5" width="1" height="1" fill="#fff"/><rect x="11" y="5" width="1" height="1" fill="#808080"/><rect x="5" y="6" width="1" height="1" fill="#fff"/><rect x="6" y="6" width="1" height="1" fill="#808080"/><rect x="7" y="6" width="1" height="1" fill="#808080"/><rect x="9" y="6" width="1" height="1" fill="#fff"/><rect x="10" y="6" width="1" height="1" fill="#808080"/><rect x="11" y="6" width="1" height="1" fill="#808080"/><rect x="4" y="7" width="1" height="1" fill="#fff"/><rect x="5" y="7" width="1" height="1" fill="#808080"/><rect x="6" y="7" width="1" height="1" fill="#808080"/><rect x="8" y="7" width="1" height="1" fill="#fff"/><rect x="9" y="7" width="1" height="1" fill="#808080"/><rect x="10" y="7" width="1" height="1" fill="#808080"/><rect x="3" y="8" width="1" height="1" fill="#fff"/><rect x="4" y="8" width="1" height="1" fill="#808080"/><rect x="5" y="8" width="1" height="1" fill="#808080"/><rect x="7" y="8" width="1" height="1" fill="#fff"/><rect x="8" y="8" width="1" height="1" fill="#808080"/><rect x="9" y="8" width="1" height="1" fill="#808080"/><rect x="11" y="8" width="1" height="1" fill="#fff"/><rect x="2" y="9" width="1" height="1" fill="#fff"/><rect x="3" y="9" width="1" height="1" fill="#808080"/><rect x="4" y="9" width="1" height="1" fill="#808080"/><rect x="6" y="9" width="1" height="1" fill="#fff"/><rect x="7" y="9" width="1" height="1" fill="#808080"/><rect x="8" y="9" width="1" height="1" fill="#808080"/><rect x="10" y="9" width="1" height="1" fill="#fff"/><rect x="11" y="9" width="1" height="1" fill="#808080"/><rect x="1" y="10" width="1" height="1" fill="#fff"/><rect x="2" y="10" width="1" height="1" fill="#808080"/><rect x="3" y="10" width="1" height="1" fill="#808080"/><rect x="5" y="10" width="1" height="1" fill="#fff"/><rect x="6" y="10" width="1" height="1" fill="#808080"/><rect x="7" y="10" width="1" height="1" fill="#808080"/><rect x="9" y="10" width="1" height="1" fill="#fff"/><rect x="10" y="10" width="1" height="1" fill="#808080"/><rect x="11" y="10" width="1" height="1" fill="#808080"/><rect x="0" y="11" width="1" height="1" fill="#fff"/><rect x="1" y="11" width="1" height="1" fill="#808080"/><rect x="2" y="11" width="1" height="1" fill="#808080"/><rect x="4" y="11" width="1" height="1" fill="#fff"/><rect x="5" y="11" width="1" height="1" fill="#808080"/><rect x="6" y="11" width="1" height="1" fill="#808080"/><rect x="8" y="11" width="1" height="1" fill="#fff"/><rect x="9" y="11" width="1" height="1" fill="#808080"/><rect x="10" y="11" width="1" height="1" fill="#808080"/></svg>
</body></html>
